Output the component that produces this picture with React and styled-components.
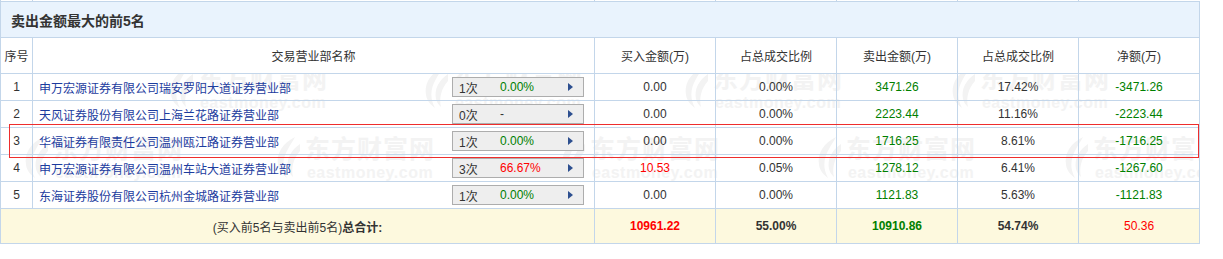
import React from "react";
import styled, { createGlobalStyle } from "styled-components";

const GlobalStyle = createGlobalStyle`
  html, body {
    margin: 0;
    padding: 0;
    background: #fff;
  }
  body {
    font-family: "Liberation Sans", "Noto Sans CJK SC", sans-serif;
    font-size: 12px;
    color: #333;
  }
`;

const COLS = [32, 562, 121, 121, 121, 121, 121];
const BORDER = "#c3d6ea";

const colors = {
  dark: "#333333",
  green: "#008000",
  red: "#ff0000",
  link: "#1c3c9e",
};

const rows = [
  { no: 1, name: "申万宏源证券有限公司瑞安罗阳大道证券营业部", times: "1次", rate: "0.00%", rateColor: "green", buy: "0.00", buyColor: "dark", buyPct: "0.00%", sell: "3471.26", sellPct: "17.42%", net: "-3471.26" },
  { no: 2, name: "天风证券股份有限公司上海兰花路证券营业部", times: "0次", rate: "-", rateColor: "dark", buy: "0.00", buyColor: "dark", buyPct: "0.00%", sell: "2223.44", sellPct: "11.16%", net: "-2223.44" },
  { no: 3, name: "华福证券有限责任公司温州瓯江路证券营业部", times: "1次", rate: "0.00%", rateColor: "green", buy: "0.00", buyColor: "dark", buyPct: "0.00%", sell: "1716.25", sellPct: "8.61%", net: "-1716.25" },
  { no: 4, name: "申万宏源证券有限公司温州车站大道证券营业部", times: "3次", rate: "66.67%", rateColor: "red", buy: "10.53", buyColor: "red", buyPct: "0.05%", sell: "1278.12", sellPct: "6.41%", net: "-1267.60" },
  { no: 5, name: "东海证券股份有限公司杭州金城路证券营业部", times: "1次", rate: "0.00%", rateColor: "green", buy: "0.00", buyColor: "dark", buyPct: "0.00%", sell: "1121.83", sellPct: "5.63%", net: "-1121.83" },
];

// watermark tiles (free canvas, relative to the data-row area)
const marks = [
  ...[165, 420, 680, 947, 1197].map((x) => ({ x, y: -8 })),
  ...[20, 272, 557, 813, 1060].map((x) => ({ x, y: 62 })),
];

const Page = styled.div`
  position: relative;
  width: 1200px;
`;

const PrevEdge = styled.div`
  display: grid;
  grid-template-columns: ${COLS.map((c) => c + "px").join(" ")};
  height: 1px;
  div {
    border-left: 1px solid ${BORDER};
  }
`;

const Table = styled.table`
  position: relative;
  z-index: 1;
  border-collapse: collapse;
  table-layout: fixed;
  width: 1200px;
  td {
    border: 1px solid ${BORDER};
    padding: 0;
  }
`;

const TitleCell = styled.td`
  height: 35px;
  background: #e9f3fd;
  padding-left: 10px !important;
  font-size: 14px;
  font-weight: bold;
  color: #333;
`;

const HeadCell = styled.td`
  height: 35px;
  background: #fff;
  text-align: center;
  color: #333;
`;

const Cell = styled.td`
  height: 26px;
  text-align: ${(p) => (p.$left ? "left" : "center")};
  color: ${(p) => colors[p.$tone || "dark"]};
  font-weight: ${(p) => (p.$bold ? "bold" : "normal")};
`;

const NameWrap = styled.div`
  display: flex;
  align-items: center;
  justify-content: space-between;
  padding: 0 10px 0 6px;
`;

const NameLink = styled.a`
  color: ${colors.link};
  text-decoration: none;
`;

const CountBtn = styled.div`
  display: flex;
  align-items: center;
  box-sizing: border-box;
  width: 132px;
  height: 20px;
  border: 1px solid #adadad;
  background: #eeeeee;
  padding: 0 0 0 6px;
  color: #333;
`;

const Times = styled.span`
  width: 41px;
`;

const Rate = styled.span`
  flex: 1;
  color: ${(p) => colors[p.$tone]};
`;

const Arrow = styled.span`
  width: 0;
  height: 0;
  margin-right: 10px;
  border-top: 4px solid transparent;
  border-bottom: 4px solid transparent;
  border-left: 5px solid #2d4f8f;
`;

const TotalRow = styled.tr`
  td {
    height: 34px;
    background: #fdf9de;
  }
`;

const TotalLabel = styled.td`
  text-align: center;
  color: #333;
  b {
    font-weight: bold;
  }
`;

const Highlight = styled.div`
  position: absolute;
  z-index: 2;
  left: 9px;
  top: 124px;
  box-sizing: border-box;
  width: 1190px;
  height: 34px;
  border: 1px solid #ee2d2d;
  pointer-events: none;
`;

const WatermarkLayer = styled.div`
  position: absolute;
  z-index: 0;
  left: 1px;
  top: 73px;
  width: 1198px;
  height: 135px;
  overflow: hidden;
  pointer-events: none;
`;

const Mark = styled.div`
  position: absolute;
  display: flex;
  align-items: flex-start;
  gap: 4px;
  white-space: nowrap;
  color: #f3f3f3;
`;

const MarkText = styled.div`
  display: flex;
  flex-direction: column;
  align-items: center;
  line-height: 1;
`;

const MarkCn = styled.span`
  font-family: "Noto Sans CJK SC", sans-serif;
  font-size: 25px;
  font-weight: bold;
  letter-spacing: 1px;
`;

const MarkEn = styled.span`
  margin-top: 5px;
  font-family: "Liberation Sans", sans-serif;
  font-size: 16px;
  font-weight: bold;
  letter-spacing: 0.5px;
`;

const Swoosh = () => (
  <svg width="28" height="44" viewBox="0 0 28 44">
    <path
      d="M22 2 C10 8 3 18 5 30 C6 36 10 40 14 43 C9 34 9 24 15 14 C17 10 20 6 22 2Z"
      fill="#f3f3f3"
    />
    <path
      d="M27 9 C18 15 13 24 15 34 C16 38 18 40 20 42 C18 33 20 24 27 16Z"
      fill="#f3f3f3"
    />
  </svg>
);

export default function App() {
  return (
    <>
      <GlobalStyle />
      <Page>
        <PrevEdge>
          {COLS.map((_, i) => (
            <div key={i} />
          ))}
        </PrevEdge>
        <WatermarkLayer aria-hidden="true">
          {marks.map((m, i) => (
            <Mark key={i} style={{ left: m.x, top: m.y }}>
              <Swoosh />
              <MarkText>
                <MarkCn>东方财富网</MarkCn>
                <MarkEn>eastmoney.com</MarkEn>
              </MarkText>
            </Mark>
          ))}
        </WatermarkLayer>
        <Table>
          <colgroup>
            {COLS.map((w, i) => (
              <col key={i} style={{ width: w }} />
            ))}
          </colgroup>
          <tbody>
            <tr>
              <TitleCell colSpan={7}>卖出金额最大的前5名</TitleCell>
            </tr>
            <tr>
              <HeadCell>序号</HeadCell>
              <HeadCell>交易营业部名称</HeadCell>
              <HeadCell>买入金额(万)</HeadCell>
              <HeadCell>占总成交比例</HeadCell>
              <HeadCell>卖出金额(万)</HeadCell>
              <HeadCell>占总成交比例</HeadCell>
              <HeadCell>净额(万)</HeadCell>
            </tr>
            {rows.map((r) => (
              <tr key={r.no}>
                <Cell>{r.no}</Cell>
                <Cell $left>
                  <NameWrap>
                    <NameLink href="#">{r.name}</NameLink>
                    <CountBtn>
                      <Times>{r.times}</Times>
                      <Rate $tone={r.rateColor}>{r.rate}</Rate>
                      <Arrow />
                    </CountBtn>
                  </NameWrap>
                </Cell>
                <Cell $tone={r.buyColor}>{r.buy}</Cell>
                <Cell>{r.buyPct}</Cell>
                <Cell $tone="green">{r.sell}</Cell>
                <Cell>{r.sellPct}</Cell>
                <Cell $tone="green">{r.net}</Cell>
              </tr>
            ))}
            <TotalRow>
              <TotalLabel colSpan={2}>
                (买入前5名与卖出前5名)<b>总合计:</b>
              </TotalLabel>
              <Cell $tone="red" $bold>10961.22</Cell>
              <Cell $bold>55.00%</Cell>
              <Cell $tone="green" $bold>10910.86</Cell>
              <Cell $bold>54.74%</Cell>
              <Cell $tone="red">50.36</Cell>
            </TotalRow>
          </tbody>
        </Table>
        <Highlight />
      </Page>
    </>
  );
}
